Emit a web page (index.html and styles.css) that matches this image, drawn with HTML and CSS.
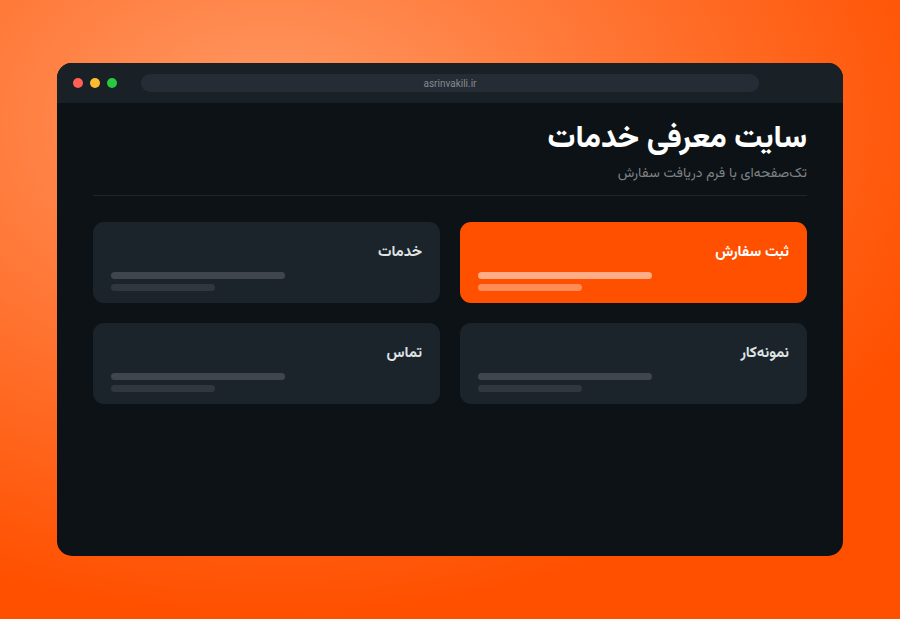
FILE: index.html
```html
<!DOCTYPE html>
<html lang="fa" dir="rtl">
<head>
  <meta charset="UTF-8">
  <meta name="viewport" content="width=device-width, initial-scale=1.0">
  <title>سایت معرفی خدمات</title>
  <link rel="stylesheet" href="styles.css">
</head>
<body>
  <div class="browser">
    <div class="toolbar" dir="ltr">
      <div class="dots">
        <span class="dot red"></span>
        <span class="dot yellow"></span>
        <span class="dot green"></span>
      </div>
      <input class="address" type="text" value="asrinvakili.ir" aria-label="نشانی" readonly>
    </div>
    <main class="page">
      <header class="page-header">
        <h1>سایت معرفی خدمات</h1>
        <p>تک‌صفحه‌ای با فرم دریافت سفارش</p>
      </header>
      <div class="cards">
        <section class="card accent">
          <h2>ثبت سفارش</h2>
          <div class="line"></div>
          <div class="line short"></div>
        </section>
        <section class="card">
          <h2>خدمات</h2>
          <div class="line"></div>
          <div class="line short"></div>
        </section>
        <section class="card">
          <h2>نمونه‌کار</h2>
          <div class="line"></div>
          <div class="line short"></div>
        </section>
        <section class="card">
          <h2>تماس</h2>
          <div class="line"></div>
          <div class="line short"></div>
        </section>
      </div>
    </main>
  </div>
</body>
</html>
```
FILE: styles.css
```css
* {
  box-sizing: border-box;
}

body {
  display: flex;
  min-height: 100vh;
  margin: 0;
  padding: 63px 57px;
  background: radial-gradient(120% 120% at 30% 20%, #ff9a66, #ff5000 66%);
  font-family: Vazirmatn, "Noto Sans", "DejaVu Sans", sans-serif;
}

.browser {
  flex: 1;
  overflow: hidden;
  border-radius: 15px;
  background: #0d1216;
}

.toolbar {
  display: flex;
  align-items: center;
  gap: 24px;
  height: 40px;
  padding: 0 84px 0 16px;
  background: #192127;
}

.dots {
  display: flex;
  gap: 7px;
}

.dot {
  width: 10px;
  height: 10px;
  border-radius: 50%;
}

.red {
  background: #ff5f57;
}

.yellow {
  background: #febc2e;
}

.green {
  background: #28c840;
}

.address {
  flex: 1;
  min-width: 0;
  height: 18px;
  padding: 0;
  border: 0;
  border-radius: 9px;
  background: #252c35;
  color: #868a8f;
  font-family: Roboto, sans-serif;
  font-size: 10px;
  text-align: center;
}

.page {
  padding: 16px 36px 36px;
}

.page-header {
  margin-bottom: 26px;
  padding-bottom: 8px;
  border-bottom: 1px solid #20252a;
}

.page-header h1 {
  margin: 0;
  color: #fff;
  font-size: 31px;
  font-weight: 800;
  line-height: 42px;
}

.page-header p {
  margin: 0;
  color: #7e8286;
  font-size: 14px;
  line-height: 26px;
}

.cards {
  display: grid;
  grid-template-columns: 1fr 1fr;
  gap: 20px;
}

.card {
  padding-bottom: 12px;
  border-radius: 11px;
  background: #1c242b;
}

.card h2 {
  margin: 0;
  padding: 19px 18px 7px;
  color: #dfe3e6;
  font-size: 15px;
  font-weight: 700;
  line-height: 24px;
}

/* placeholder text lines */
.line {
  width: 50%;
  height: 7px;
  margin: 0 auto 5px 18px;
  border-radius: 4px;
  background: #40464d;
}

.line.short {
  width: 30%;
  margin-bottom: 0;
  background: #31373e;
}

.accent {
  background: #ff5000;
}

.accent h2 {
  color: #fff;
}

.accent .line {
  background: #ffac87;
}

.accent .line.short {
  background: #ff8c57;
}
```
